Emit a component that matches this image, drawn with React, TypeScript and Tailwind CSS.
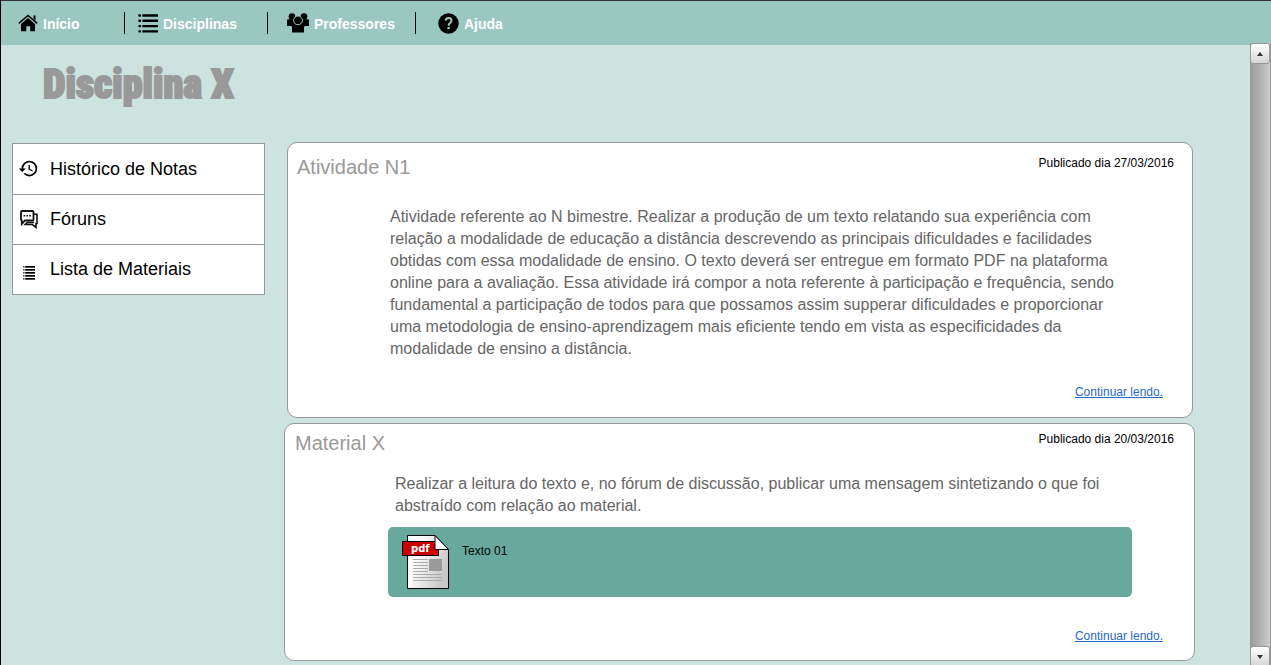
import type { ReactNode } from "react";
import { MdHistory } from "react-icons/md";

function HomeIcon() {
  return (
    <svg viewBox="0 0 20 18" className="h-[18px] w-5 shrink-0" aria-hidden="true">
      <path d="M10 4 17 10V17.200h-4.800v-5H8.300v5H3V10Z" />
      <path d="M.8 9.400 10 1.500l9.200 7.900" fill="none" stroke="#000" strokeWidth="1.500" />
      <path d="M15.500 1.500h2v5l-2-1.700Z" />
    </svg>
  );
}

function ListIcon({ className }: { className: string }) {
  return (
    <svg viewBox="0 0 20 19" className={className} aria-hidden="true">
      {[0, 5.3, 10.6, 15.9].map((y) => (
        <g key={y}>
          <rect x="0.3" y={y + 0.3} width="2.8" height="2.4" rx="1" />
          <rect x="4.3" y={y + 0.3} width="15.7" height="2.4" rx="0.3" />
        </g>
      ))}
    </svg>
  );
}

function MaterialsIcon() {
  return (
    <svg viewBox="0 0 12 14" className="mt-2 h-3.5 w-3" aria-hidden="true">
      {[0, 3, 6, 9, 12].map((y) => (
        <g key={y}>
          <rect x="0.200" y={y + 0.2} width="1.300" height="1.300" />
          <rect x="2.200" y={y} width="9.800" height="1.700" />
        </g>
      ))}
    </svg>
  );
}

function GroupIcon() {
  return (
    <svg viewBox="0 0 22 20" className="h-5 w-[22px] shrink-0" aria-hidden="true">
      <circle cx="5" cy="3.5" r="3.3" />
      <circle cx="17" cy="3.5" r="3.3" />
      <path d="M0 7.5Q0 6.2 1.3 6.2h19.4Q22 6.2 22 7.5V13h-4l-2 2H6l-2-2H0Z" />
      <circle cx="11" cy="7.4" r="4.4" stroke="#9ac7c0" strokeWidth="1" />
      <path d="M5 14q0-2.200 2.200-2.200 3.800 1.800 7.600 0Q17 11.800 17 14v5.500H5Z" />
    </svg>
  );
}

function HelpIcon() {
  return (
    <svg viewBox="0 0 21 21" className="size-[21px] shrink-0" aria-hidden="true">
      <circle cx="10.5" cy="10.5" r="10.2" />
      <path d="M7.6 7.6Q8 5 10.6 5q2.9 0 2.9 2.6 0 1.5-1.5 2.5-1.4 1-1.4 2.6" fill="none" stroke="#9ac7c0" strokeWidth="2" />
      <rect x="9.4" y="14" width="2.3" height="2.2" fill="#9ac7c0" />
    </svg>
  );
}

function ForumIcon() {
  return (
    <svg viewBox="0 0 20 20" className="size-5" fill="none" stroke="#111" strokeWidth="1.8" aria-hidden="true">
      <path d="M3 2h10.5q1 0 1 1v7.5q0 1-1 1H6L2.8 15v-3.5Q2 11.4 2 10.5V3q0-1 1-1Z" />
      <path d="M15 5.2h3v9.3h-1v3.8l-3.6-2.8H6.2l2-2H15" strokeWidth="1.6" />
      <path d="M4.6 6.7h1.6m1.2 0H9m1.2 0h1.6" strokeWidth="1.6" />
    </svg>
  );
}

function PdfIcon() {
  return (
    <svg viewBox="0 0 48 55" className="h-[55px] w-12 shrink-0" aria-hidden="true">
      <defs>
        <linearGradient id="paper" x1="0" x2="1" y1="0" y2="0.4">
          <stop offset="0.3" stopColor="#fff" />
          <stop offset="1" stopColor="#c9c9c9" />
        </linearGradient>
      </defs>
      <path d="M5.5.5H33l13.500 14V53.500h-41Z" fill="url(#paper)" stroke="#000" />
      <rect x="0.5" y="6.5" width="36" height="14" fill="#c00" stroke="#000" />
      <path d="M33 .5v14h13.500Z" fill="#fff" stroke="#000" />
      <text x="9" y="17" fill="#fff" fontFamily="DejaVu Sans" fontSize="10" fontWeight="bold">pdf</text>
      <path d="M11 24.500h15M11 27.500h15M11 30.500h15M11 33.500h15M11 36.500h15M11 39.500h29M11 42.500h29M11 45.500h29" stroke="#aaa" />
      <rect x="27" y="24" width="13" height="12" fill="#999" />
    </svg>
  );
}

function NavItem({ icon, label, className }: { icon: ReactNode; label: string; className: string }) {
  return (
    <li className={className}>
      <a href="#" className="flex items-center gap-[5px]">
        {icon}
        <span className="pt-0.5">{label}</span>
      </a>
    </li>
  );
}

function SideItem({ icon, label }: { icon: ReactNode; label: string }) {
  return (
    <li className="border-b border-[#999]">
      <a href="#" className="flex h-[49px] items-center gap-[11px] pb-0.5 pl-[5px]">
        <span className="flex w-[21px] justify-center">{icon}</span>
        {label}
      </a>
    </li>
  );
}

function Post({ title, date, children, className }: { title: string; date: string; children: ReactNode; className: string }) {
  return (
    <article className={`flex flex-col rounded-[10px] border border-[#999] bg-white ${className}`}>
      <header className="flex items-start justify-between">
        <h2 className="text-xl leading-7 text-[#999]">{title}</h2>
        <time className="pt-0.5 text-xs leading-4">{date}</time>
      </header>
      {children}
      <a href="#" className="mt-auto self-end text-xs leading-4 text-[#2a6ac1] underline">
        Continuar lendo.
      </a>
    </article>
  );
}

export default function App() {
  return (
    <div className="flex h-screen min-h-0 flex-col overflow-hidden border-l border-black bg-[#cde3df] font-['Liberation_Sans',Arial,sans-serif] text-black">
      <nav className="shrink-0 border-t border-[#333] bg-[#9ac7c0] text-sm leading-5 font-bold text-white">
        <ul className="flex h-11 items-center">
          <NavItem icon={<HomeIcon />} label="Início" className="w-[124px] border-r border-black pl-[17px]" />
          <NavItem icon={<ListIcon className="h-[19px] w-5 shrink-0" />} label="Disciplinas" className="w-[143px] border-r border-black pl-[13px]" />
          <NavItem icon={<GroupIcon />} label="Professores" className="w-[148px] border-r border-black pl-[19px]" />
          <NavItem icon={<HelpIcon />} label="Ajuda" className="pl-[22px]" />
        </ul>
      </nav>
      <div className="flex min-h-0 flex-1">
        <main className="min-w-0 flex-1 overflow-hidden">
          <h1 className="h-[97px] pt-3.5 pl-[42px] font-[Impact,'Roboto_Condensed','Open_Sans_Condensed','Liberation_Sans',sans-serif] text-[40px] leading-[52px] font-black text-[#999] [-webkit-text-stroke:2px_#999]">
            Disciplina X
          </h1>
          <div className="flex items-start gap-[19px] pr-[55px] pl-[11px]">
            <aside className="mt-px w-[253px] shrink-0">
              <ul className="border-x border-t border-[#999] bg-white pt-px text-lg">
                <SideItem icon={<MdHistory className="size-[21px]" />} label="Histórico de Notas" />
                <SideItem icon={<ForumIcon />} label="Fóruns" />
                <SideItem icon={<MaterialsIcon />} label="Lista de Materiais" />
              </ul>
            </aside>
            <div className="flex min-w-0 flex-1 flex-col gap-[5px]">
              <Post title="Atividade N1" date="Publicado dia 27/03/2016" className="mr-0.5 ml-[3px] min-h-[276px] pt-2.5 pb-[17px] pl-[9px] *:last:mr-[29px] *:first:pr-[18px]">
                <p className="mt-[25px] mb-6 ml-[93px] max-w-[735px] leading-[22px] text-[#666]">
                  Atividade referente ao N bimestre. Realizar a produção de um texto relatando sua experiência com relação a modalidade de educação a distância descrevendo as principais dificuldades e facilidades obtidas com essa modalidade de ensino. O texto deverá ser entregue em formato PDF na plataforma online para a avaliação. Essa atividade irá compor a nota referente à participação e frequência, sendo fundamental a participação de todos para que possamos assim supperar dificuldades e proporcionar uma metodologia de ensino-aprendizagem mais eficiente tendo em vista as especificidades da modalidade de ensino a distância.
                </p>
              </Post>
              <Post title="Material X" date="Publicado dia 20/03/2016" className="min-h-[238px] pt-[5px] pb-4 pl-2.5 *:last:mr-[31px] *:first:pr-5">
                <p className="mt-4 ml-[100px] max-w-[735px] leading-[22px] text-[#666]">
                  Realizar a leitura do texto e, no fórum de discussão, publicar uma mensagem sintetizando o que foi abstraído com relação ao material.
                </p>
                <a href="#" className="mt-2.5 mr-[62px] ml-[93px] flex h-[70px] items-start gap-3 rounded-[5px] bg-[#67aa9d] pt-2 pl-3.5 text-xs leading-4">
                  <PdfIcon />
                  <span className="pt-2">Texto 01</span>
                </a>
              </Post>
            </div>
          </div>
        </main>
        <div className="-mt-0.5 flex w-[21px] shrink-0 flex-col justify-between border-r border-[#999] bg-linear-to-r from-[#999] to-[#ccc]">
          <button aria-label="Rolar para cima" className="flex h-[21px] items-center justify-center rounded-[3px] border border-[#999] bg-linear-to-b from-white to-[#d6d6d6]">
            <svg viewBox="0 0 6 4" className="h-1 w-1.5"><path d="M3 0 6 4H0Z" fill="#333" /></svg>
          </button>
          <button aria-label="Rolar para baixo" className="-mb-0.5 flex h-[21px] items-center justify-center rounded-[3px] border border-[#999] bg-linear-to-b from-white to-[#d6d6d6]">
            <svg viewBox="0 0 6 4" className="h-1 w-1.5"><path d="M3 4 6 0H0Z" fill="#333" /></svg>
          </button>
        </div>
      </div>
    </div>
  );
}
